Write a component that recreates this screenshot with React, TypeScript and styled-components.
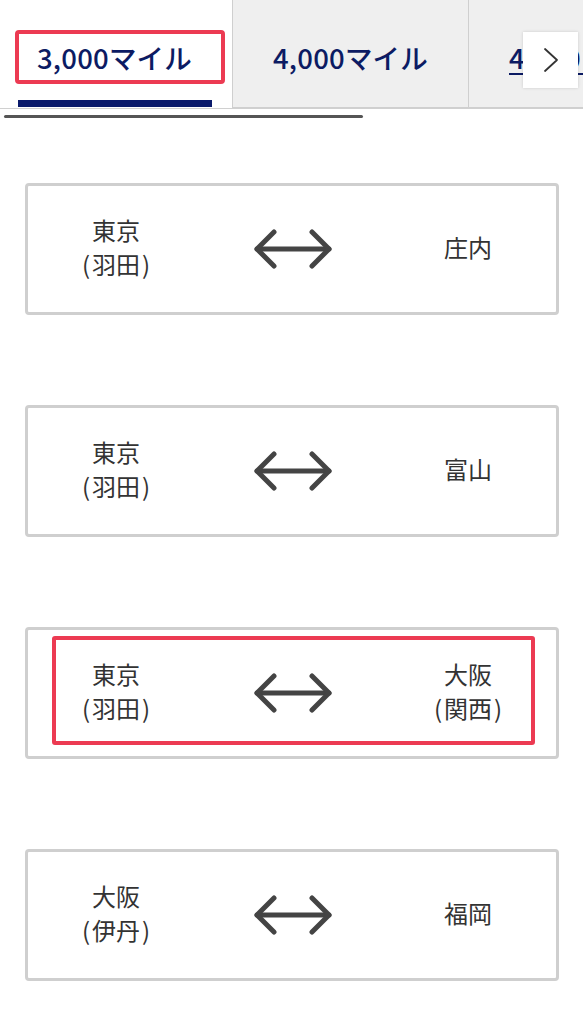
import React from "react";
import styled, { createGlobalStyle } from "styled-components";

const Global = createGlobalStyle`
  html, body { margin: 0; padding: 0; background: #fff; }
  body { font-family: "Noto Sans CJK JP", "Noto Sans", sans-serif; }
`;

const Page = styled.div`
  width: 583px;
  min-height: 1024px;
  background: #fff;
`;

const TabBar = styled.div`
  position: relative;
  overflow: hidden;
  border-bottom: 1px solid #d0d0d0;
`;

const TabRow = styled.div`
  display: flex;
  width: max-content;
`;

const Tab = styled.div<{ $active?: boolean }>`
  position: relative;
  box-sizing: border-box;
  width: ${(p) => (p.$active ? 232 : 236)}px;
  height: 108px;
  padding-left: ${(p) => (p.$active ? 37 : 40)}px;
  padding-top: 6px;
  display: flex;
  align-items: center;
  background: ${(p) => (p.$active ? "#fff" : "#efefef")};
  border-left: ${(p) => (p.$active ? "none" : "1px solid #cfcfcf")};
  border-bottom: ${(p) => (p.$active ? "none" : "1px solid #cfcfcf")};
`;

const TabLabel = styled.span<{ $link?: boolean }>`
  font-size: 27.5px;
  font-weight: 500;
  color: #0c1b63;
  letter-spacing: 0.2px;
  white-space: nowrap;
  text-decoration: ${(p) => (p.$link ? "underline" : "none")};
  text-underline-offset: 4px;
  text-decoration-thickness: 2px;
`;

const ActiveBar = styled.div`
  position: absolute;
  left: 18px;
  bottom: 1px;
  width: 194px;
  height: 7px;
  background: #0a1a6b;
`;

const TabMark = styled.div`
  position: absolute;
  left: 15px;
  top: 30px;
  width: 210px;
  height: 54px;
  box-sizing: border-box;
  border: 4px solid #ec3a52;
  border-radius: 4px;
`;

const NextButton = styled.div`
  position: absolute;
  left: 523px;
  top: 32px;
  width: 55px;
  height: 56px;
  background: #fff;
  box-shadow: 0 0 3px rgba(0, 0, 0, 0.15);
  display: flex;
  align-items: center;
  justify-content: center;
`;

const ScrollTrack = styled.div`
  height: 14px;
  display: flex;
  align-items: center;
  padding-left: 4px;
`;

const ScrollThumb = styled.div`
  width: 359px;
  height: 3px;
  border-radius: 2px;
  background: #555;
`;

const List = styled.div`
  display: flex;
  flex-direction: column;
  gap: 90px;
  padding: 60px 24px 40px 25px;
`;

const Card = styled.div`
  position: relative;
  height: 132px;
  box-sizing: border-box;
  border: 3px solid #cfcfcf;
  border-radius: 4px;
  display: grid;
  grid-template-columns: 1fr 1fr 1fr;
  align-items: center;
`;

const Place = styled.div`
  text-align: center;
  font-size: 24px;
  line-height: 34px;
  color: #333;
  padding-bottom: 4px;
`;

const Paren = styled.span`
  margin: 0 2px;
`;

const Mid = styled.div`
  display: flex;
  justify-content: center;
`;

const CardMark = styled.div`
  position: absolute;
  left: 24px;
  top: 6px;
  width: 483px;
  height: 109px;
  box-sizing: border-box;
  border: 4px solid #ec3a52;
  border-radius: 3px;
`;

const Arrow = () => (
  <svg width="80" height="42" viewBox="0 0 80 42" fill="none">
    <g stroke="#444" strokeWidth="5" strokeLinecap="round" strokeLinejoin="round">
      <path d="M5 21 H77" />
      <path d="M22 4 L5 21 L22 38" />
      <path d="M60 4 L77 21 L60 38" />
    </g>
  </svg>
);

const Chevron = () => (
  <svg width="18" height="26" viewBox="0 0 18 26" fill="none">
    <path d="M3 2 L15 13 L3 24" stroke="#333" strokeWidth="1.8" strokeLinecap="round" strokeLinejoin="round" />
  </svg>
);

type Route = { from: [string, string?]; to: [string, string?]; mark?: boolean };

const routes: Route[] = [
  { from: ["東京", "羽田"], to: ["庄内"] },
  { from: ["東京", "羽田"], to: ["富山"] },
  { from: ["東京", "羽田"], to: ["大阪", "関西"], mark: true },
  { from: ["大阪", "伊丹"], to: ["福岡"] },
];

const PlaceName = ({ name }: { name: [string, string?] }) => (
  <Place>
    <div>{name[0]}</div>
    {name[1] && (
      <div>
        <Paren>(</Paren>
        {name[1]}
        <Paren>)</Paren>
      </div>
    )}
  </Place>
);

export default function App() {
  return (
    <Page>
      <Global />
      <TabBar>
        <TabRow>
          <Tab $active>
            <TabLabel>3,000マイル</TabLabel>
            <TabMark />
            <ActiveBar />
          </Tab>
          <Tab>
            <TabLabel>4,000マイル</TabLabel>
          </Tab>
          <Tab>
            <TabLabel $link>4,500マイル</TabLabel>
          </Tab>
        </TabRow>
        <NextButton>
          <Chevron />
        </NextButton>
      </TabBar>
      <ScrollTrack>
        <ScrollThumb />
      </ScrollTrack>
      <List>
        {routes.map((r, i) => (
          <Card key={i}>
            <PlaceName name={r.from} />
            <Mid>
              <Arrow />
            </Mid>
            <PlaceName name={r.to} />
            {r.mark && <CardMark />}
          </Card>
        ))}
      </List>
    </Page>
  );
}
